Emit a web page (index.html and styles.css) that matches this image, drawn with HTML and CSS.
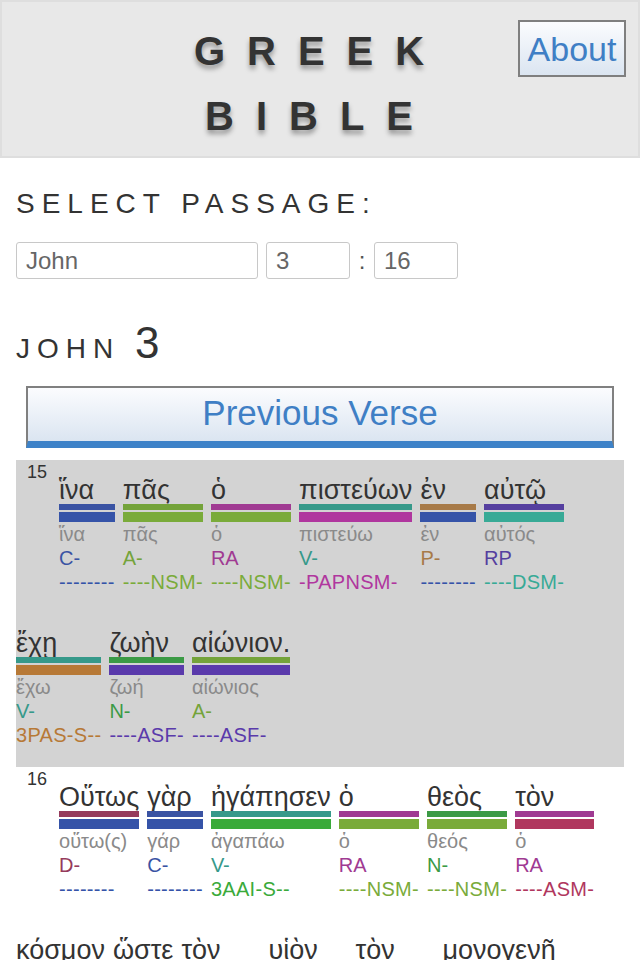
FILE: index.html
```html
<!DOCTYPE html>
<html lang="el">
<head>
<meta charset="utf-8">
<title>Greek Bible</title>
<link rel="stylesheet" href="styles.css">
</head>
<body>
<header class="top">
  <h1 class="logo"><span class="logo-line">GREEK</span><span class="logo-line">BIBLE</span></h1>
  <button class="about">About</button>
</header>
<main class="content">
  <h2 class="label">SELECT PASSAGE:</h2>
  <div class="picker">
    <input class="field book" value="John">
    <input class="field num" value="3">
    <span class="colon">:</span>
    <input class="field num" value="16">
  </div>
  <h2 class="chapter">JOHN <span class="chapter-num">3</span></h2>
  <button class="prev">Previous Verse</button>

  <section class="verse current">
    <span class="vnum">15</span>
    <div class="w"><span class="gk">ἵνα</span><span class="bar1 pos-c"></span><span class="bar2 m-none"></span><span class="lem">ἵνα</span><span class="p1 pos-c">C-</span><span class="p2 m-none">--------</span></div>
    <div class="w"><span class="gk">πᾶς</span><span class="bar1 pos-a"></span><span class="bar2 m-nsm"></span><span class="lem">πᾶς</span><span class="p1 pos-a">A-</span><span class="p2 m-nsm">----NSM-</span></div>
    <div class="w"><span class="gk">ὁ</span><span class="bar1 pos-ra"></span><span class="bar2 m-nsm"></span><span class="lem">ὁ</span><span class="p1 pos-ra">RA</span><span class="p2 m-nsm">----NSM-</span></div>
    <div class="w"><span class="gk">πιστεύων</span><span class="bar1 pos-v"></span><span class="bar2 m-papnsm"></span><span class="lem">πιστεύω</span><span class="p1 pos-v">V-</span><span class="p2 m-papnsm">-PAPNSM-</span></div>
    <div class="w"><span class="gk">ἐν</span><span class="bar1 pos-p"></span><span class="bar2 m-none"></span><span class="lem">ἐν</span><span class="p1 pos-p">P-</span><span class="p2 m-none">--------</span></div>
    <div class="w"><span class="gk">αὐτῷ</span><span class="bar1 pos-rp"></span><span class="bar2 m-dsm"></span><span class="lem">αὐτός</span><span class="p1 pos-rp">RP</span><span class="p2 m-dsm">----DSM-</span></div>
    <div class="w"><span class="gk">ἔχῃ</span><span class="bar1 pos-v"></span><span class="bar2 m-3pas"></span><span class="lem">ἔχω</span><span class="p1 pos-v">V-</span><span class="p2 m-3pas">3PAS-S--</span></div>
    <div class="w"><span class="gk">ζωὴν</span><span class="bar1 pos-n"></span><span class="bar2 m-asf"></span><span class="lem">ζωή</span><span class="p1 pos-n">N-</span><span class="p2 m-asf">----ASF-</span></div>
    <div class="w"><span class="gk">αἰώνιον.</span><span class="bar1 pos-a"></span><span class="bar2 m-asf"></span><span class="lem">αἰώνιος</span><span class="p1 pos-a">A-</span><span class="p2 m-asf">----ASF-</span></div>
  </section>

  <section class="verse">
    <span class="vnum">16</span>
    <div class="w"><span class="gk">Οὕτως</span><span class="bar1 pos-d"></span><span class="bar2 m-none"></span><span class="lem">οὕτω(ς)</span><span class="p1 pos-d">D-</span><span class="p2 m-none">--------</span></div>
    <div class="w"><span class="gk">γὰρ</span><span class="bar1 pos-c"></span><span class="bar2 m-none"></span><span class="lem">γάρ</span><span class="p1 pos-c">C-</span><span class="p2 m-none">--------</span></div>
    <div class="w"><span class="gk">ἠγάπησεν</span><span class="bar1 pos-v"></span><span class="bar2 m-3aai"></span><span class="lem">ἀγαπάω</span><span class="p1 pos-v">V-</span><span class="p2 m-3aai">3AAI-S--</span></div>
    <div class="w"><span class="gk">ὁ</span><span class="bar1 pos-ra"></span><span class="bar2 m-nsm"></span><span class="lem">ὁ</span><span class="p1 pos-ra">RA</span><span class="p2 m-nsm">----NSM-</span></div>
    <div class="w"><span class="gk">θεὸς</span><span class="bar1 pos-n"></span><span class="bar2 m-nsm"></span><span class="lem">θεός</span><span class="p1 pos-n">N-</span><span class="p2 m-nsm">----NSM-</span></div>
    <div class="w"><span class="gk">τὸν</span><span class="bar1 pos-ra"></span><span class="bar2 m-asm"></span><span class="lem">ὁ</span><span class="p1 pos-ra">RA</span><span class="p2 m-asm">----ASM-</span></div>
    <div class="w"><span class="gk">κόσμον</span><span class="bar1 pos-n"></span><span class="bar2 m-asm"></span><span class="lem">κόσμος</span><span class="p1 pos-n">N-</span><span class="p2 m-asm">----ASM-</span></div>
    <div class="w"><span class="gk">ὥστε</span><span class="bar1 pos-c"></span><span class="bar2 m-none"></span><span class="lem">ὥστε</span><span class="p1 pos-c">C-</span><span class="p2 m-none">--------</span></div>
    <div class="w"><span class="gk">τὸν</span><span class="bar1 pos-ra"></span><span class="bar2 m-asm"></span><span class="lem">ὁ</span><span class="p1 pos-ra">RA</span><span class="p2 m-asm">----ASM-</span></div>
    <div class="w"><span class="gk">υἱὸν</span><span class="bar1 pos-n"></span><span class="bar2 m-asm"></span><span class="lem">υἱός</span><span class="p1 pos-n">N-</span><span class="p2 m-asm">----ASM-</span></div>
    <div class="w"><span class="gk">τὸν</span><span class="bar1 pos-ra"></span><span class="bar2 m-asm"></span><span class="lem">ὁ</span><span class="p1 pos-ra">RA</span><span class="p2 m-asm">----ASM-</span></div>
    <div class="w"><span class="gk">μονογενῆ</span><span class="bar1 pos-a"></span><span class="bar2 m-asm"></span><span class="lem">μονογενής</span><span class="p1 pos-a">A-</span><span class="p2 m-asm">----ASM-</span></div>
  </section>
</main>
</body>
</html>
```

FILE: styles.css
```css
* { box-sizing: border-box; }

body {
  margin: 0;
  font-family: "Liberation Sans", Arial, "DejaVu Sans", sans-serif;
  color: #333;
  background: #fff;
}

.top {
  position: relative;
  height: 158px;
  background: #e8e8e8;
  border: 2px solid #dedede;
  padding-top: 17px;
}

.logo {
  margin: 0;
  text-align: center;
  font-size: 40px;
  font-weight: bold;
  line-height: 65px;
  letter-spacing: 22px;
  color: #333;
  text-shadow: 0 4px 5px rgba(0, 0, 0, 0.35);
}

.logo-line { display: block; }

.about {
  position: absolute;
  top: 18px;
  right: 12px;
  width: 108px;
  height: 57px;
  padding: 0;
  border: 2px solid #7f7f7f;
  background: linear-gradient(#fbfcfe, #dbe5f1);
  font-family: inherit;
  font-size: 34px;
  color: #3f7fc5;
  line-height: 1;
}

.content { padding: 0 16px; }

.label {
  margin: 30px 0 0;
  font-size: 28px;
  font-weight: normal;
  letter-spacing: 7px;
  line-height: 32px;
  color: #333;
}

.picker {
  display: flex;
  align-items: center;
  margin-top: 22px;
}

.field {
  height: 37px;
  border: 1px solid #c8c8c8;
  border-radius: 3px;
  padding: 0 9px;
  font-family: inherit;
  font-size: 24px;
  color: #666;
  background: #fff;
}

.book { width: 242px; margin-right: 8px; }
.num { width: 84px; }

.colon {
  width: 24px;
  text-align: center;
  font-size: 24px;
  color: #555;
}

.chapter {
  margin: 44px 0 0;
  font-size: 28px;
  font-weight: normal;
  letter-spacing: 7px;
  line-height: 40px;
  color: #333;
}

.chapter-num {
  font-size: 44px;
  letter-spacing: 0;
}

.prev {
  display: block;
  width: calc(100% - 20px);
  height: 62px;
  margin: 17px 10px 0;
  padding: 0 0 4px;
  border: 2px solid #808080;
  border-bottom: 7px solid #3d82c8;
  background: linear-gradient(#fbfcfe, #dbe5f1);
  font-family: inherit;
  font-size: 35px;
  color: #3f7fc5;
}

.verse {
  display: flex;
  flex-wrap: wrap;
  align-items: flex-start;
  row-gap: 19px;
  margin-top: 12px;
  padding-bottom: 20px;
}

.verse + .verse { margin-top: 0; }

.verse.current { background: #d3d3d3; }

.vnum {
  margin: 3px 12px 0 11px;
  font-size: 18px;
  line-height: 18px;
  color: #333;
}

.w {
  display: flex;
  flex-direction: column;
  margin: 16px 8px 0 0;
}

.gk {
  font-size: 27px;
  line-height: 28px;
  color: #333;
  white-space: nowrap;
}

.bar1, .bar2 {
  display: block;
  background: currentColor;
}

.bar1 { height: 6px; }
.bar2 { height: 10px; margin-top: 2px; }

.lem, .p1, .p2 {
  font-size: 20px;
  line-height: 24px;
  white-space: nowrap;
}

.p2 { letter-spacing: 0.3px; }

.lem { color: #8a8a8a; }

/* part of speech colours */
.pos-c  { color: #3a53a3; }
.pos-a  { color: #74a33a; }
.pos-ra { color: #a03a92; }
.pos-v  { color: #36998a; }
.pos-p  { color: #a77a48; }
.pos-rp { color: #553f9f; }
.pos-n  { color: #3b9a45; }
.pos-d  { color: #963b5c; }

/* morphology colours */
.m-none   { color: #3553a8; }
.m-nsm    { color: #7aab3a; }
.m-papnsm { color: #b0369e; }
.m-dsm    { color: #38aa96; }
.m-3pas   { color: #b77936; }
.m-asf    { color: #5a3aab; }
.m-3aai   { color: #3aaa3a; }
.m-asm    { color: #b0375e; }
```
